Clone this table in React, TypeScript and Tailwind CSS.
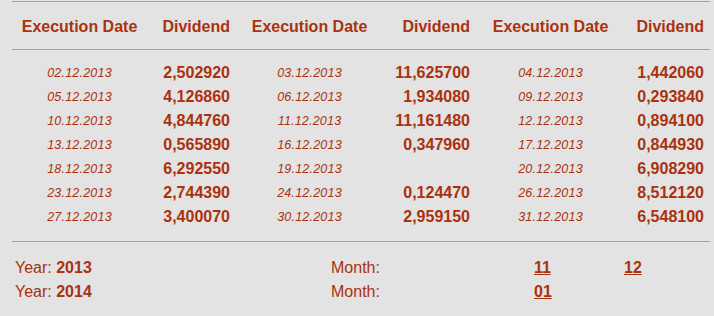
const rows: [string, string, string, string, string, string][] = [
  ['02.12.2013', '2,502920', '03.12.2013', '11,625700', '04.12.2013', '1,442060'],
  ['05.12.2013', '4,126860', '06.12.2013', '1,934080', '09.12.2013', '0,293840'],
  ['10.12.2013', '4,844760', '11.12.2013', '11,161480', '12.12.2013', '0,894100'],
  ['13.12.2013', '0,565890', '16.12.2013', '0,347960', '17.12.2013', '0,844930'],
  ['18.12.2013', '6,292550', '19.12.2013', '', '20.12.2013', '6,908290'],
  ['23.12.2013', '2,744390', '24.12.2013', '0,124470', '26.12.2013', '8,512120'],
  ['27.12.2013', '3,400070', '30.12.2013', '2,959150', '31.12.2013', '6,548100'],
];

const cols = 'grid grid-cols-[135px_91px_143px_97px_145px_89px]';

function DateCell({ v }: { v: string }) {
  return <div className="text-center italic text-[12.5px] leading-6 tracking-[0.2px]">{v}</div>;
}

function DivCell({ v }: { v: string }) {
  return <div className="text-right pr-2 font-bold text-[16px] leading-6">{v}</div>;
}

export default function App() {
  return (
    <div
      className="w-[714px] h-[316px] bg-[#e3e3e3] text-[#aa320f] overflow-hidden"
      style={{ fontFamily: '"Liberation Sans", Arial, sans-serif' }}
    >
      <div className="ml-3 w-[698px] border-t border-[#a3a3a3] mt-px">
        <div className={`${cols} h-[47px] items-center font-bold text-[16px] pt-[2px]`}>
          <div className="text-center">Execution Date</div>
          <div className="text-right pr-2">Dividend</div>
          <div className="text-center">Execution Date</div>
          <div className="text-right pr-2">Dividend</div>
          <div className="text-center">Execution Date</div>
          <div className="text-right pr-2">Dividend</div>
        </div>
        <div className="border-t border-[#a3a3a3] pt-[11px] pb-[12px]">
          {rows.map((r, i) => (
            <div key={i} className={cols}>
              <DateCell v={r[0]} />
              <DivCell v={r[1]} />
              <DateCell v={r[2]} />
              <DivCell v={r[3]} />
              <DateCell v={r[4]} />
              <DivCell v={r[5]} />
            </div>
          ))}
        </div>
        <div className="border-t border-[#a3a3a3]" />
      </div>
      <div className="pt-[14px] pl-[15px]">
        {[
          { y: '2013', m: ['11', '12'] },
          { y: '2014', m: ['01'] },
        ].map((row) => (
          <div key={row.y} className="grid grid-cols-[316px_203px_90px_80px] text-[16px] leading-6">
            <div>
              Year: <span className="font-bold">{row.y}</span>
            </div>
            <div>Month:</div>
            {row.m.map((m) => (
              <div key={m}>
                <a href="#" className="font-bold underline">
                  {m}
                </a>
              </div>
            ))}
          </div>
        ))}
      </div>
    </div>
  );
}
